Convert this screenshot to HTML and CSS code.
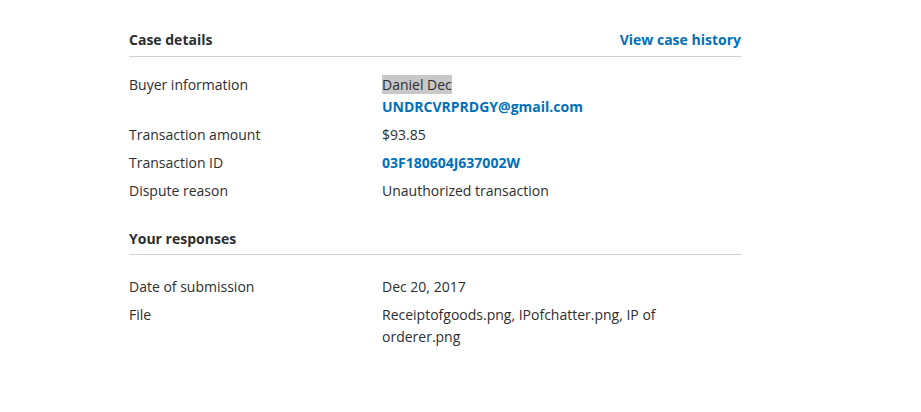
FILE: index.html
```html
<!DOCTYPE html>
<html lang="en">
<head>
<meta charset="utf-8">
<link rel="stylesheet" href="styles.css">
</head>
<body>
<main class="case">
  <section class="section">
    <div class="section-head">
      <h2 class="section-title">Case details</h2>
      <a class="head-link" href="#">View case history</a>
    </div>
    <dl class="rows">
      <div class="row">
        <dt class="label">Buyer information</dt>
        <dd class="value"><span class="hl">Daniel Dec</span><br><a class="link" href="#">UNDRCVRPRDGY@gmail.com</a></dd>
      </div>
      <div class="row">
        <dt class="label">Transaction amount</dt>
        <dd class="value">$93.85</dd>
      </div>
      <div class="row">
        <dt class="label">Transaction ID</dt>
        <dd class="value"><a class="link" href="#">03F180604J637002W</a></dd>
      </div>
      <div class="row">
        <dt class="label">Dispute reason</dt>
        <dd class="value">Unauthorized transaction</dd>
      </div>
    </dl>
  </section>
  <section class="section second">
    <div class="section-head">
      <h2 class="section-title">Your responses</h2>
    </div>
    <dl class="rows">
      <div class="row">
        <dt class="label">Date of submission</dt>
        <dd class="value">Dec 20, 2017</dd>
      </div>
      <div class="row">
        <dt class="label">File</dt>
        <dd class="value">Receiptofgoods.png, IPofchatter.png, IP of orderer.png</dd>
      </div>
    </dl>
  </section>
</main>
</body>
</html>
```
FILE: styles.css
```css
html, body {
  margin: 0;
  background: #fff;
}
body {
  font-family: "Open Sans", "Noto Sans", sans-serif;
  font-size: 14px;
  color: #2c2e2f;
}
.case {
  width: 612px;
  margin-left: 129px;
  padding-top: 30px;
}
.section-head {
  display: flex;
  justify-content: space-between;
  align-items: center;
  padding-bottom: 6px;
  border-bottom: 1px solid #cbd2d6;
}
.section-title {
  margin: 0;
  font-size: 14px;
  font-weight: 700;
  line-height: 20px;
}
.head-link {
  font-weight: 700;
  color: #0070ba;
  text-decoration: none;
  line-height: 20px;
}
.rows {
  margin: 17px 0 0;
}
.row {
  display: grid;
  grid-template-columns: 253px 1fr;
  line-height: 22px;
  margin-bottom: 6px;
}
.label, .value {
  margin: 0;
}
.value {
  max-width: 300px;
}
.hl {
  background: #c8c8c8;
}
.link {
  color: #0070ba;
  font-weight: 700;
  text-decoration: none;
}
.second {
  margin-top: 27px;
}
.second .section-head {
  padding-bottom: 5px;
}
.second .rows {
  margin-top: 21px;
}
```
